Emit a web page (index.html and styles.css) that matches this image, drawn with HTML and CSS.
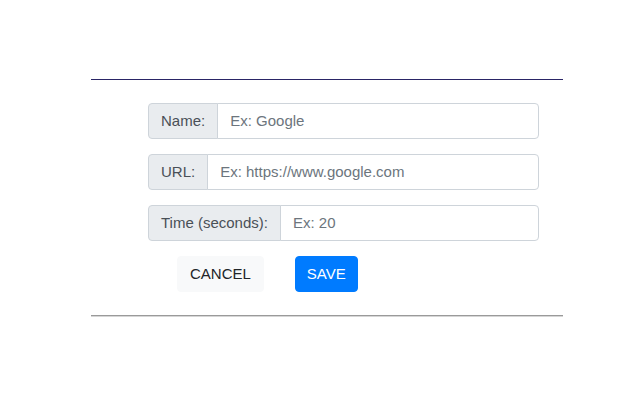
FILE: index.html
```html
<!DOCTYPE html>
<html>
<head>
<meta charset="utf-8">
<link rel="stylesheet" href="styles.css">
</head>
<body>
<div class="wrap">
  <hr class="rule-top">
  <form class="form">
    <div class="group">
      <span class="addon">Name:</span>
      <input class="field" type="text" placeholder="Ex: Google">
    </div>
    <div class="group">
      <span class="addon">URL:</span>
      <input class="field" type="text" placeholder="Ex: https://www.google.com">
    </div>
    <div class="group">
      <span class="addon">Time (seconds):</span>
      <input class="field" type="text" placeholder="Ex: 20">
    </div>
    <div class="actions">
      <button type="button" class="btn btn-light">CANCEL</button>
      <button type="button" class="btn btn-primary">SAVE</button>
    </div>
  </form>
  <hr class="rule-bottom">
</div>
</body>
</html>
```
FILE: styles.css
```css
html, body {
  margin: 0;
  padding: 0;
  background: #ffffff;
}
body {
  font-family: "Liberation Sans", Arial, sans-serif;
  font-size: 15px;
  color: #212529;
}
.wrap {
  width: 472px;
  margin-left: 91px;
  padding-top: 79px;
}
.rule-top {
  margin: 0;
  height: 0;
  border: 0;
  border-top: 1px solid #2a2566;
}
.rule-bottom {
  margin: 0;
  height: 0;
  border: 0;
  border-top: 1px solid #9a9a9a;
  border-bottom: 1px solid #d6d6d6;
}
.form {
  margin: 23px 24px 23px 57px;
}
.group {
  display: flex;
  height: 36px;
  margin-bottom: 15px;
}
.addon {
  display: flex;
  align-items: center;
  padding: 0 12px 1px;
  background: #e9ecef;
  border: 1px solid #ced4da;
  border-radius: 4px 0 0 4px;
  color: #495057;
  font-size: 15px;
  white-space: nowrap;
  box-sizing: border-box;
}
.field {
  flex: 1;
  min-width: 0;
  margin: 0 0 0 -1px;
  padding: 0 12px 1px;
  height: 36px;
  box-sizing: border-box;
  border: 1px solid #ced4da;
  border-radius: 0 4px 4px 0;
  font-family: "Liberation Sans", Arial, sans-serif;
  font-size: 15px;
  color: #495057;
  background: #ffffff;
  outline: none;
}
.field::placeholder {
  color: #6c757d;
  opacity: 1;
}
.actions {
  display: flex;
  gap: 31px;
  margin-left: 29px;
  height: 36px;
}
.btn {
  height: 36px;
  padding: 0 12px 1px;
  border: 1px solid transparent;
  border-radius: 4px;
  font-family: "Liberation Sans", Arial, sans-serif;
  font-size: 15px;
  cursor: pointer;
}
.btn-light {
  background: #f8f9fa;
  border-color: #f8f9fa;
  color: #212529;
}
.btn-primary {
  background: #007bff;
  border-color: #007bff;
  color: #ffffff;
  padding: 0 11px 1px;
}
```
